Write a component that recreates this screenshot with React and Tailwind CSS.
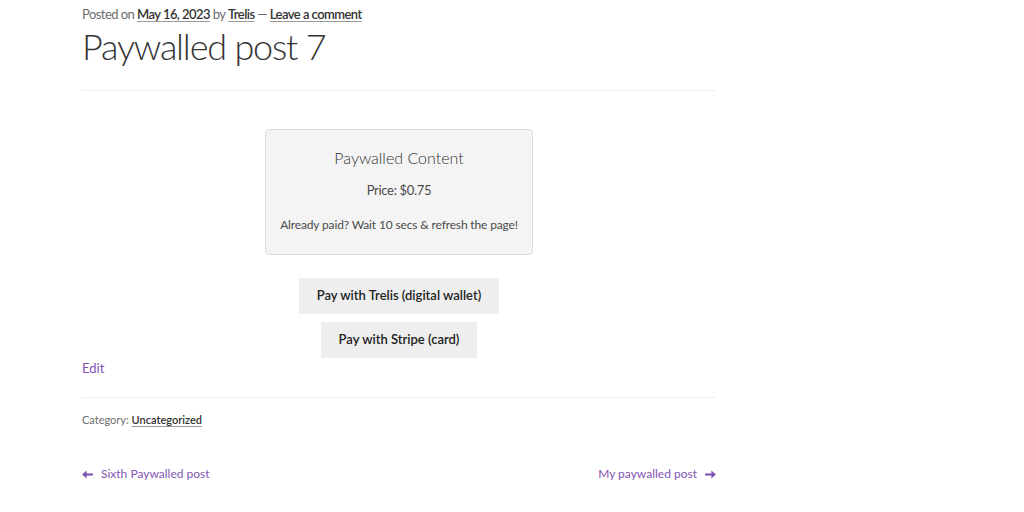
const FONT = { fontFamily: "Lato, 'Open Sans', sans-serif" };

function LongArrow({ dir = "right" }) {
  return (
    <svg
      width="11"
      height="9"
      viewBox="0 0 12 10"
      className={dir === "left" ? "rotate-180" : ""}
      fill="currentColor"
    >
      <rect x="0" y="3.8" width="8" height="2.4" />
      <path d="M7 0.5 L12 5 L7 9.5 Z" />
    </svg>
  );
}

export default function App() {
  return (
    <div className="w-full h-[512px] overflow-hidden bg-white text-[#6d6d6d]" style={FONT}>
      <div className="ml-[82px] w-[634px]">
        {/* post meta */}
        <div className="pt-[5px] text-[13px] leading-[18px] tracking-[-0.55px]">
          Posted on{" "}
          <a className="font-semibold text-[#333333] underline underline-offset-2 decoration-[#999999]">May 16, 2023</a> by{" "}
          <a className="font-semibold text-[#333333] underline underline-offset-2 decoration-[#999999]">Trelis</a> —{" "}
          <a className="font-semibold text-[#333333] underline underline-offset-2 decoration-[#999999]">Leave a comment</a>
        </div>
        <h1 className="mt-[1px] text-[36px] leading-[44px] font-light tracking-[-1.2px] text-[#333333]">
          Paywalled post 7
        </h1>
        <div className="mt-[22px] h-px bg-[#eeeeee]" />

        {/* paywall */}
        <div className="mt-[38px] flex flex-col items-center">
          <div className="w-[268px] h-[126px] rounded border border-[#dddddd] bg-[#f4f4f4] flex flex-col items-center pt-[17px]">
            <div className="text-[16px] leading-[22px] font-light text-[#333333]">Paywalled Content</div>
            <div className="mt-[12px] text-[13px] leading-[18px] tracking-[-0.3px] text-[#4a4a4a]">Price: $0.75</div>
            <div className="mt-[17px] text-[12px] leading-[18px] tracking-[-0.15px] text-[#4a4a4a]">
              Already paid? Wait 10 secs &amp; refresh the page!
            </div>
          </div>
          <button className="mt-[23px] h-[36px] w-[200px] bg-[#eeeeee] text-[13px] font-semibold text-[#222222]">
            Pay with Trelis (digital wallet)
          </button>
          <button className="mt-[8px] h-[36px] w-[156px] bg-[#eeeeee] text-[13px] font-semibold text-[#222222]">
            Pay with Stripe (card)
          </button>
        </div>

        <div className="text-[13px] leading-[20px] text-[#7f54b3]">Edit</div>
        <div className="mt-[19px] h-px bg-[#eeeeee]" />
        <div className="mt-[14px] text-[11px] leading-[16px]">
          Category:{" "}
          <a className="font-semibold text-[#333333] underline underline-offset-2 decoration-[#999999]">Uncategorized</a>
        </div>

        {/* post navigation */}
        <div className="mt-[36px] flex justify-between text-[12px] leading-[20px] text-[#7f54b3]">
          <a className="flex items-center gap-[8px]">
            <LongArrow dir="left" />
            Sixth Paywalled post
          </a>
          <a className="flex items-center gap-[8px]">
            My paywalled post
            <LongArrow dir="right" />
          </a>
        </div>
      </div>
    </div>
  );
}
